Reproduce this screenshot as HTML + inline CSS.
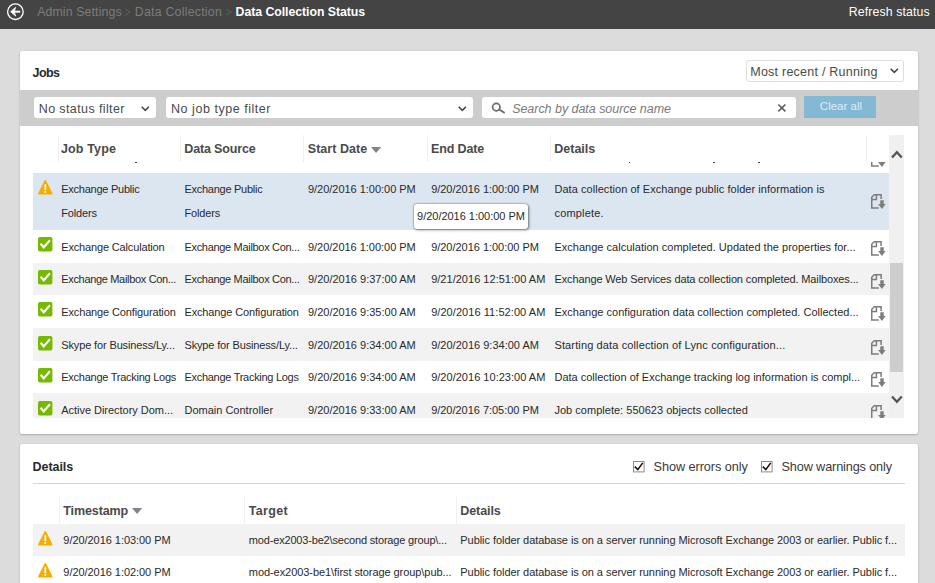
<!DOCTYPE html>
<html><head><meta charset="utf-8">
<style>
*{box-sizing:border-box;margin:0;padding:0}
html,body{width:935px;height:583px;overflow:hidden}
body{background:#dcdcdc;font-family:"Liberation Sans",sans-serif;position:relative}
.a{position:absolute}
.t{position:absolute;white-space:pre}
.panel{position:absolute;background:#fff;border-radius:2px;box-shadow:0 1px 2px rgba(0,0,0,.22),0 0 1px rgba(0,0,0,.12)}
.vl{position:absolute;width:1px;background:#f0f0f0}
.g{position:absolute;background:#f2f2f2}
.box{position:absolute;background:#fff;border-radius:3px}
</style></head><body>

<div class="a" style="left:0;top:0;width:935px;height:29px;background:#444444"></div>
<svg class="a" style="left:6px;top:2px" width="19" height="19" viewBox="0 0 19 19"><circle cx="9.4" cy="9.7" r="7.8" fill="none" stroke="#fff" stroke-width="1.3"/><path d="M14.2 9.7H7" fill="none" stroke="#fff" stroke-width="1.9"/><path d="M4.7 9.7L9.6 5.3L8.3 9.7L9.6 14.1z" fill="#fff" stroke="#fff" stroke-width=".8" stroke-linejoin="round"/></svg>
<svg class="a" style="left:125.4px;top:8px" width="7" height="9" viewBox="0 0 7 9"><path d="M.3 1.2L5.2 4.2L.3 7.3" fill="none" stroke="#606060" stroke-width="1"/></svg>
<svg class="a" style="left:226.3px;top:8px" width="7" height="9" viewBox="0 0 7 9"><path d="M.3 1.2L5.2 4.2L.3 7.3" fill="none" stroke="#606060" stroke-width="1"/></svg>
<div class="panel" style="left:20px;top:51px;width:898px;height:383px"></div>
<div class="panel" style="left:20px;top:444px;width:898px;height:160px"></div>
<div class="a" style="left:746px;top:60px;width:158px;height:22px;border:1px solid #dedede;border-radius:3px;background:#fff"></div>
<svg class="a" style="left:889.6px;top:68.3px" width="9" height="6" viewBox="0 0 9 6"><path d="M.7.8L4.3 4.4L7.9.8" fill="none" stroke="#444" stroke-width="1.5"/></svg>
<div class="a" style="left:20px;top:90px;width:898px;height:36px;background:#cdcdcd"></div>
<div class="box" style="left:34px;top:97px;width:122px;height:21px"></div>
<svg class="a" style="left:141.3px;top:105.5px" width="9" height="6" viewBox="0 0 9 6"><path d="M.7.8L4.3 4.4L7.9.8" fill="none" stroke="#444" stroke-width="1.5"/></svg>
<div class="box" style="left:166px;top:97px;width:307px;height:21px"></div>
<svg class="a" style="left:458.3px;top:105.5px" width="9" height="6" viewBox="0 0 9 6"><path d="M.7.8L4.3 4.4L7.9.8" fill="none" stroke="#444" stroke-width="1.5"/></svg>
<div class="box" style="left:482px;top:97px;width:314px;height:21px"></div>
<svg class="a" style="left:490px;top:102px" width="16" height="13" viewBox="0 0 16 13"><circle cx="6.3" cy="5.1" r="3.7" fill="none" stroke="#6b6b6b" stroke-width="1.7"/><path d="M9.3 7.5L14 10.5" stroke="#6b6b6b" stroke-width="2" fill="none" stroke-linecap="round"/></svg>
<svg class="a" style="left:777px;top:103px" width="10" height="10" viewBox="0 0 10 10"><path d="M1.3 1.5L8.4 8.3M8.4 1.5L1.3 8.3" stroke="#5f5f5f" stroke-width="1.7" fill="none"/></svg>
<div class="a" style="left:803.5px;top:96.1px;width:72.8px;height:21.8px;background:#84b9d5"></div>
<div class="a" style="left:33px;top:135px;width:871px;height:283px;overflow:hidden">
<div class="a" style="left:-33px;top:-135px;width:935px;height:583px">
<div class="a" style="left:33px;top:173px;width:856px;height:57px;background:#dce6f1"></div>
<div class="g" style="left:33px;top:263px;width:856px;height:32px"></div>
<div class="g" style="left:33px;top:328px;width:856px;height:33px"></div>
<div class="g" style="left:33px;top:393px;width:856px;height:25px"></div>
<svg class="a" style="left:870.8px;top:151.6px" width="16" height="16" viewBox="0 0 16 16"><path d="M7.8 14H.75V3.2L3.2.75h6.9V4.9M.75 5.4H5.4V.75" fill="none" stroke="#7d7d7d" stroke-width="1.5"/><path d="M9.3 6.2h3.4V10h1.9l-3.6 4.9L7.1 10h2.2z" fill="#7d7d7d"/></svg>
<div class="a" style="left:628.5px;top:162px;width:1.5px;height:1px;background:#444"></div>
<div class="a" style="left:713px;top:162px;width:1.5px;height:1px;background:#444"></div>
<div class="a" style="left:758px;top:162px;width:1.5px;height:1px;background:#444"></div>
<div class="a" style="left:135px;top:162px;width:1.5px;height:1px;background:#444"></div>
<div class="a" style="left:33px;top:135px;width:856px;height:27px;background:#fff"></div>
<div class="vl" style="left:57.5px;top:135px;height:27px"></div>
<div class="vl" style="left:180.3px;top:135px;height:27px"></div>
<div class="vl" style="left:303.3px;top:135px;height:27px"></div>
<div class="vl" style="left:426.5px;top:135px;height:27px"></div>
<div class="vl" style="left:550.2px;top:135px;height:27px"></div>
<div class="vl" style="left:866.3px;top:135px;height:27px"></div>
<svg class="a" style="left:371px;top:146.7px" width="11" height="7" viewBox="0 0 11 7"><path d="M0 0h10.2L5.1 6.1z" fill="#80848c"/></svg>
<svg class="a" style="left:37.6px;top:180.1px" width="16" height="16" viewBox="0 0 16 16"><path d="M7.3 1L1 13.6h12.6z" fill="#f4ae00" stroke="#f4ae00" stroke-width="1.8" stroke-linejoin="round"/><rect x="6.4" y="4.3" width="1.8" height="5.8" fill="#fff"/><rect x="6.4" y="11.1" width="1.8" height="1.7" fill="#fff"/></svg>
<svg class="a" style="left:870.8px;top:194.2px" width="16" height="16" viewBox="0 0 16 16"><path d="M7.8 14H.75V3.2L3.2.75h6.9V4.9M.75 5.4H5.4V.75" fill="none" stroke="#7d7d7d" stroke-width="1.5"/><path d="M9.3 6.2h3.4V10h1.9l-3.6 4.9L7.1 10h2.2z" fill="#7d7d7d"/></svg>
<svg class="a" style="left:37.8px;top:237.1px" width="15" height="15" viewBox="0 0 15 15"><rect x="0" y="0" width="14.4" height="14.6" rx="1.8" fill="#76b900"/><path d="M2.6 6.7L5.7 10.3L11.9 3.3" fill="none" stroke="#fff" stroke-width="2.1"/></svg>
<svg class="a" style="left:870.8px;top:241.0px" width="16" height="16" viewBox="0 0 16 16"><path d="M7.8 14H.75V3.2L3.2.75h6.9V4.9M.75 5.4H5.4V.75" fill="none" stroke="#7d7d7d" stroke-width="1.5"/><path d="M9.3 6.2h3.4V10h1.9l-3.6 4.9L7.1 10h2.2z" fill="#7d7d7d"/></svg>
<svg class="a" style="left:37.8px;top:269.7px" width="15" height="15" viewBox="0 0 15 15"><rect x="0" y="0" width="14.4" height="14.6" rx="1.8" fill="#76b900"/><path d="M2.6 6.7L5.7 10.3L11.9 3.3" fill="none" stroke="#fff" stroke-width="2.1"/></svg>
<svg class="a" style="left:870.8px;top:273.59999999999997px" width="16" height="16" viewBox="0 0 16 16"><path d="M7.8 14H.75V3.2L3.2.75h6.9V4.9M.75 5.4H5.4V.75" fill="none" stroke="#7d7d7d" stroke-width="1.5"/><path d="M9.3 6.2h3.4V10h1.9l-3.6 4.9L7.1 10h2.2z" fill="#7d7d7d"/></svg>
<svg class="a" style="left:37.8px;top:302.3px" width="15" height="15" viewBox="0 0 15 15"><rect x="0" y="0" width="14.4" height="14.6" rx="1.8" fill="#76b900"/><path d="M2.6 6.7L5.7 10.3L11.9 3.3" fill="none" stroke="#fff" stroke-width="2.1"/></svg>
<svg class="a" style="left:870.8px;top:306.2px" width="16" height="16" viewBox="0 0 16 16"><path d="M7.8 14H.75V3.2L3.2.75h6.9V4.9M.75 5.4H5.4V.75" fill="none" stroke="#7d7d7d" stroke-width="1.5"/><path d="M9.3 6.2h3.4V10h1.9l-3.6 4.9L7.1 10h2.2z" fill="#7d7d7d"/></svg>
<svg class="a" style="left:37.8px;top:335.7px" width="15" height="15" viewBox="0 0 15 15"><rect x="0" y="0" width="14.4" height="14.6" rx="1.8" fill="#76b900"/><path d="M2.6 6.7L5.7 10.3L11.9 3.3" fill="none" stroke="#fff" stroke-width="2.1"/></svg>
<svg class="a" style="left:870.8px;top:339.59999999999997px" width="16" height="16" viewBox="0 0 16 16"><path d="M7.8 14H.75V3.2L3.2.75h6.9V4.9M.75 5.4H5.4V.75" fill="none" stroke="#7d7d7d" stroke-width="1.5"/><path d="M9.3 6.2h3.4V10h1.9l-3.6 4.9L7.1 10h2.2z" fill="#7d7d7d"/></svg>
<svg class="a" style="left:37.8px;top:368.4px" width="15" height="15" viewBox="0 0 15 15"><rect x="0" y="0" width="14.4" height="14.6" rx="1.8" fill="#76b900"/><path d="M2.6 6.7L5.7 10.3L11.9 3.3" fill="none" stroke="#fff" stroke-width="2.1"/></svg>
<svg class="a" style="left:870.8px;top:372.29999999999995px" width="16" height="16" viewBox="0 0 16 16"><path d="M7.8 14H.75V3.2L3.2.75h6.9V4.9M.75 5.4H5.4V.75" fill="none" stroke="#7d7d7d" stroke-width="1.5"/><path d="M9.3 6.2h3.4V10h1.9l-3.6 4.9L7.1 10h2.2z" fill="#7d7d7d"/></svg>
<svg class="a" style="left:37.8px;top:400.7px" width="15" height="15" viewBox="0 0 15 15"><rect x="0" y="0" width="14.4" height="14.6" rx="1.8" fill="#76b900"/><path d="M2.6 6.7L5.7 10.3L11.9 3.3" fill="none" stroke="#fff" stroke-width="2.1"/></svg>
<svg class="a" style="left:870.8px;top:404.59999999999997px" width="16" height="16" viewBox="0 0 16 16"><path d="M7.8 14H.75V3.2L3.2.75h6.9V4.9M.75 5.4H5.4V.75" fill="none" stroke="#7d7d7d" stroke-width="1.5"/><path d="M9.3 6.2h3.4V10h1.9l-3.6 4.9L7.1 10h2.2z" fill="#7d7d7d"/></svg>
<div class="t" style="left:61.00px;top:142.00px;height:15px;line-height:15px;font-size:12.5px;letter-spacing:0.142px;color:#4a4a4a;font-weight:bold;">Job Type</div>
<div class="t" style="left:184.25px;top:142.00px;height:15px;line-height:15px;font-size:12.5px;letter-spacing:-0.145px;color:#4a4a4a;font-weight:bold;">Data Source</div>
<div class="t" style="left:307.75px;top:142.00px;height:15px;line-height:15px;font-size:12.5px;letter-spacing:0.050px;color:#4a4a4a;font-weight:bold;">Start Date</div>
<div class="t" style="left:431.00px;top:142.00px;height:15px;line-height:15px;font-size:12.5px;letter-spacing:-0.134px;color:#4a4a4a;font-weight:bold;">End Date</div>
<div class="t" style="left:554.25px;top:142.00px;height:15px;line-height:15px;font-size:12.5px;letter-spacing:0.000px;color:#4a4a4a;font-weight:bold;">Details</div>
<div class="t" style="left:61.24px;top:183.00px;height:13px;line-height:13px;font-size:11px;letter-spacing:-0.252px;color:#2a2a2a;">Exchange Public</div>
<div class="t" style="left:61.24px;top:207.00px;height:13px;line-height:13px;font-size:11px;letter-spacing:-0.161px;color:#2a2a2a;">Folders</div>
<div class="t" style="left:184.44px;top:183.00px;height:13px;line-height:13px;font-size:11px;letter-spacing:-0.267px;color:#2a2a2a;">Exchange Public</div>
<div class="t" style="left:184.44px;top:207.00px;height:13px;line-height:13px;font-size:11px;letter-spacing:-0.161px;color:#2a2a2a;">Folders</div>
<div class="t" style="left:307.94px;top:183.00px;height:13px;line-height:13px;font-size:11px;letter-spacing:-0.023px;color:#2a2a2a;">9/20/2016 1:00:00 PM</div>
<div class="t" style="left:431.14px;top:183.00px;height:13px;line-height:13px;font-size:11px;letter-spacing:-0.023px;color:#2a2a2a;">9/20/2016 1:00:00 PM</div>
<div class="t" style="left:554.44px;top:183.00px;height:13px;line-height:13px;font-size:11px;letter-spacing:0.050px;color:#2a2a2a;">Data collection of Exchange public folder information is</div>
<div class="t" style="left:554.44px;top:207.00px;height:13px;line-height:13px;font-size:11px;letter-spacing:0.190px;color:#2a2a2a;">complete.</div>
<div class="t" style="left:61.24px;top:241.00px;height:13px;line-height:13px;font-size:11px;letter-spacing:-0.157px;color:#2a2a2a;">Exchange Calculation</div>
<div class="t" style="left:184.44px;top:241.00px;height:13px;line-height:13px;font-size:11px;letter-spacing:-0.313px;color:#2a2a2a;">Exchange Mailbox Con...</div>
<div class="t" style="left:307.94px;top:241.00px;height:13px;line-height:13px;font-size:11px;letter-spacing:-0.023px;color:#2a2a2a;">9/20/2016 1:00:00 PM</div>
<div class="t" style="left:431.14px;top:241.00px;height:13px;line-height:13px;font-size:11px;letter-spacing:-0.023px;color:#2a2a2a;">9/20/2016 1:00:00 PM</div>
<div class="t" style="left:554.44px;top:241.00px;height:13px;line-height:13px;font-size:11px;letter-spacing:0.016px;color:#2a2a2a;">Exchange calculation completed. Updated the properties for...</div>
<div class="t" style="left:61.24px;top:273.00px;height:13px;line-height:13px;font-size:11px;letter-spacing:-0.326px;color:#2a2a2a;">Exchange Mailbox Con...</div>
<div class="t" style="left:184.44px;top:273.00px;height:13px;line-height:13px;font-size:11px;letter-spacing:-0.313px;color:#2a2a2a;">Exchange Mailbox Con...</div>
<div class="t" style="left:307.94px;top:273.00px;height:13px;line-height:13px;font-size:11px;letter-spacing:0.009px;color:#2a2a2a;">9/20/2016 9:37:00 AM</div>
<div class="t" style="left:431.14px;top:273.00px;height:13px;line-height:13px;font-size:11px;letter-spacing:0.023px;color:#2a2a2a;">9/21/2016 12:51:00 AM</div>
<div class="t" style="left:554.44px;top:273.00px;height:13px;line-height:13px;font-size:11px;letter-spacing:-0.124px;color:#2a2a2a;">Exchange Web Services data collection completed. Mailboxes...</div>
<div class="t" style="left:61.24px;top:306.00px;height:13px;line-height:13px;font-size:11px;letter-spacing:-0.138px;color:#2a2a2a;">Exchange Configuration</div>
<div class="t" style="left:184.44px;top:306.00px;height:13px;line-height:13px;font-size:11px;letter-spacing:-0.138px;color:#2a2a2a;">Exchange Configuration</div>
<div class="t" style="left:307.94px;top:306.00px;height:13px;line-height:13px;font-size:11px;letter-spacing:0.009px;color:#2a2a2a;">9/20/2016 9:35:00 AM</div>
<div class="t" style="left:431.14px;top:306.00px;height:13px;line-height:13px;font-size:11px;letter-spacing:0.063px;color:#2a2a2a;">9/20/2016 11:52:00 AM</div>
<div class="t" style="left:554.44px;top:306.00px;height:13px;line-height:13px;font-size:11px;letter-spacing:0.015px;color:#2a2a2a;">Exchange configuration data collection completed. Collected...</div>
<div class="t" style="left:61.24px;top:339.00px;height:13px;line-height:13px;font-size:11px;letter-spacing:-0.133px;color:#2a2a2a;">Skype for Business/Ly...</div>
<div class="t" style="left:184.44px;top:339.00px;height:13px;line-height:13px;font-size:11px;letter-spacing:-0.146px;color:#2a2a2a;">Skype for Business/Ly...</div>
<div class="t" style="left:307.94px;top:339.00px;height:13px;line-height:13px;font-size:11px;letter-spacing:0.009px;color:#2a2a2a;">9/20/2016 9:34:00 AM</div>
<div class="t" style="left:431.14px;top:339.00px;height:13px;line-height:13px;font-size:11px;letter-spacing:0.009px;color:#2a2a2a;">9/20/2016 9:34:00 AM</div>
<div class="t" style="left:554.44px;top:339.00px;height:13px;line-height:13px;font-size:11px;letter-spacing:0.129px;color:#2a2a2a;">Starting data collection of Lync configuration...</div>
<div class="t" style="left:61.24px;top:371.00px;height:13px;line-height:13px;font-size:11px;letter-spacing:-0.255px;color:#2a2a2a;">Exchange Tracking Logs</div>
<div class="t" style="left:184.44px;top:371.00px;height:13px;line-height:13px;font-size:11px;letter-spacing:-0.283px;color:#2a2a2a;">Exchange Tracking Logs</div>
<div class="t" style="left:307.94px;top:371.00px;height:13px;line-height:13px;font-size:11px;letter-spacing:0.009px;color:#2a2a2a;">9/20/2016 9:34:00 AM</div>
<div class="t" style="left:431.14px;top:371.00px;height:13px;line-height:13px;font-size:11px;letter-spacing:0.023px;color:#2a2a2a;">9/20/2016 10:23:00 AM</div>
<div class="t" style="left:554.44px;top:371.00px;height:13px;line-height:13px;font-size:11px;letter-spacing:0.000px;color:#2a2a2a;">Data collection of Exchange tracking log information is compl...</div>
<div class="t" style="left:61.24px;top:404.00px;height:13px;line-height:13px;font-size:11px;letter-spacing:-0.029px;color:#2a2a2a;">Active Directory Dom...</div>
<div class="t" style="left:184.44px;top:404.00px;height:13px;line-height:13px;font-size:11px;letter-spacing:0.004px;color:#2a2a2a;">Domain Controller</div>
<div class="t" style="left:307.94px;top:404.00px;height:13px;line-height:13px;font-size:11px;letter-spacing:0.009px;color:#2a2a2a;">9/20/2016 9:33:00 AM</div>
<div class="t" style="left:431.14px;top:404.00px;height:13px;line-height:13px;font-size:11px;letter-spacing:-0.023px;color:#2a2a2a;">9/20/2016 7:05:00 PM</div>
<div class="t" style="left:554.44px;top:404.00px;height:13px;line-height:13px;font-size:11px;letter-spacing:0.021px;color:#2a2a2a;">Job complete: 550623 objects collected</div>
<div class="a" style="left:889px;top:135px;width:15px;height:283px;background:#f0f0f0"></div>
<div class="a" style="left:890px;top:262.5px;width:12.7px;height:109.5px;background:#cdcdcd"></div>
<svg class="a" style="left:891px;top:149.5px" width="12" height="9" viewBox="0 0 12 9"><path d="M1 7.6L5.9 2.2L10.8 7.6" fill="none" stroke="#555" stroke-width="2.3"/></svg>
<svg class="a" style="left:891px;top:394.5px" width="12" height="9" viewBox="0 0 12 9"><path d="M1 1.4L5.9 6.8L10.8 1.4" fill="none" stroke="#555" stroke-width="2.3"/></svg>
</div></div>
<div class="a" style="left:414px;top:204px;width:114px;height:25px;background:#fff;border-radius:3px;box-shadow:0 0 2px rgba(0,0,0,.55),1px 1px 3px rgba(0,0,0,.4)"></div>
<div class="t" style="left:417.09px;top:210.00px;height:13px;line-height:13px;font-size:11px;letter-spacing:-0.023px;color:#2a2a2a;">9/20/2016 1:00:00 PM</div>
<div class="a" style="left:33px;top:483px;width:871.5px;height:1px;background:#d6d6d6"></div>
<div class="g" style="left:33px;top:524px;width:871.5px;height:31.7px"></div>
<div class="vl" style="left:58.7px;top:496.5px;height:27px"></div>
<div class="vl" style="left:244.2px;top:496.5px;height:27px"></div>
<div class="vl" style="left:455.8px;top:496.5px;height:27px"></div>
<svg class="a" style="left:131.8px;top:508.2px" width="11" height="7" viewBox="0 0 11 7"><path d="M0 0h10.2L5.1 6.1z" fill="#80848c"/></svg>
<svg class="a" style="left:37.6px;top:531.3px" width="16" height="16" viewBox="0 0 16 16"><path d="M7.3 1L1 13.6h12.6z" fill="#f4ae00" stroke="#f4ae00" stroke-width="1.8" stroke-linejoin="round"/><rect x="6.4" y="4.3" width="1.8" height="5.8" fill="#fff"/><rect x="6.4" y="11.1" width="1.8" height="1.7" fill="#fff"/></svg>
<svg class="a" style="left:37.6px;top:563.3px" width="16" height="16" viewBox="0 0 16 16"><path d="M7.3 1L1 13.6h12.6z" fill="#f4ae00" stroke="#f4ae00" stroke-width="1.8" stroke-linejoin="round"/><rect x="6.4" y="4.3" width="1.8" height="5.8" fill="#fff"/><rect x="6.4" y="11.1" width="1.8" height="1.7" fill="#fff"/></svg>
<svg class="a" style="left:633.3px;top:461px" width="12" height="12" viewBox="0 0 12 12"><rect x=".5" y=".5" width="10.6" height="10.4" fill="#fff" stroke="#8c8c8c" stroke-width="1"/><path d="M1.8 5.6L4.8 8.6L9.7 1.9" fill="none" stroke="#111" stroke-width="1.6"/></svg>
<svg class="a" style="left:761.1px;top:461px" width="12" height="12" viewBox="0 0 12 12"><rect x=".5" y=".5" width="10.6" height="10.4" fill="#fff" stroke="#8c8c8c" stroke-width="1"/><path d="M1.8 5.6L4.8 8.6L9.7 1.9" fill="none" stroke="#111" stroke-width="1.6"/></svg>
<div class="t" style="left:37.16px;top:5.00px;height:15px;line-height:15px;font-size:12.3px;letter-spacing:0.135px;color:#7c7c7c;">Admin Settings</div>
<div class="t" style="left:134.76px;top:5.00px;height:15px;line-height:15px;font-size:12.3px;letter-spacing:0.256px;color:#7c7c7c;">Data Collection</div>
<div class="t" style="left:235.56px;top:5.00px;height:15px;line-height:15px;font-size:12.3px;letter-spacing:-0.045px;color:#ffffff;font-weight:bold;">Data Collection Status</div>
<div class="t" style="left:848.66px;top:5.00px;height:15px;line-height:15px;font-size:12.3px;letter-spacing:0.137px;color:#ffffff;">Refresh status</div>
<div class="t" style="left:32.50px;top:66.00px;height:15px;line-height:15px;font-size:12.5px;letter-spacing:-0.562px;color:#2a2a2a;font-weight:bold;">Jobs</div>
<div class="t" style="left:750.25px;top:65.00px;height:15px;line-height:15px;font-size:12.5px;letter-spacing:0.240px;color:#4a4a4a;">Most recent / Running</div>
<div class="t" style="left:38.75px;top:102.00px;height:15px;line-height:15px;font-size:12.5px;letter-spacing:0.387px;color:#4a4a4a;">No status filter</div>
<div class="t" style="left:171.05px;top:102.00px;height:15px;line-height:15px;font-size:12.5px;letter-spacing:0.534px;color:#4a4a4a;">No job type filter</div>
<div class="t" style="left:512.15px;top:102.00px;height:15px;line-height:15px;font-size:12.5px;letter-spacing:-0.037px;color:#7a7a7a;font-style:italic;">Search by data source name</div>
<div class="t" style="left:819.81px;top:99.00px;height:14px;line-height:14px;font-size:11.5px;letter-spacing:0.024px;color:#dcecf5;">Clear all</div>
<div class="t" style="left:32.50px;top:460.00px;height:15px;line-height:15px;font-size:12.5px;letter-spacing:-0.042px;color:#2a2a2a;font-weight:bold;">Details</div>
<div class="t" style="left:653.54px;top:460.00px;height:15px;line-height:15px;font-size:12.7px;letter-spacing:-0.059px;color:#3a3a3a;">Show errors only</div>
<div class="t" style="left:781.54px;top:460.00px;height:15px;line-height:15px;font-size:12.7px;letter-spacing:-0.136px;color:#3a3a3a;">Show warnings only</div>
<div class="t" style="left:63.25px;top:504.00px;height:15px;line-height:15px;font-size:12.5px;letter-spacing:-0.096px;color:#4a4a4a;font-weight:bold;">Timestamp</div>
<div class="t" style="left:248.75px;top:504.00px;height:15px;line-height:15px;font-size:12.5px;letter-spacing:0.324px;color:#4a4a4a;font-weight:bold;">Target</div>
<div class="t" style="left:460.25px;top:504.00px;height:15px;line-height:15px;font-size:12.5px;letter-spacing:-0.083px;color:#4a4a4a;font-weight:bold;">Details</div>
<div class="t" style="left:63.34px;top:534.00px;height:13px;line-height:13px;font-size:11px;letter-spacing:-0.049px;color:#2a2a2a;">9/20/2016 1:03:00 PM</div>
<div class="t" style="left:248.84px;top:534.00px;height:13px;line-height:13px;font-size:11px;letter-spacing:-0.175px;color:#2a2a2a;">mod-ex2003-be2\second storage group\...</div>
<div class="t" style="left:460.34px;top:534.00px;height:13px;line-height:13px;font-size:11px;letter-spacing:-0.057px;color:#2a2a2a;">Public folder database is on a server running Microsoft Exchange 2003 or earlier. Public f...</div>
<div class="t" style="left:63.34px;top:566.00px;height:13px;line-height:13px;font-size:11px;letter-spacing:-0.049px;color:#2a2a2a;">9/20/2016 1:02:00 PM</div>
<div class="t" style="left:248.84px;top:566.00px;height:13px;line-height:13px;font-size:11px;letter-spacing:-0.069px;color:#2a2a2a;">mod-ex2003-be1\first storage group\pub...</div>
<div class="t" style="left:460.34px;top:566.00px;height:13px;line-height:13px;font-size:11px;letter-spacing:-0.057px;color:#2a2a2a;">Public folder database is on a server running Microsoft Exchange 2003 or earlier. Public f...</div>
</body></html>
